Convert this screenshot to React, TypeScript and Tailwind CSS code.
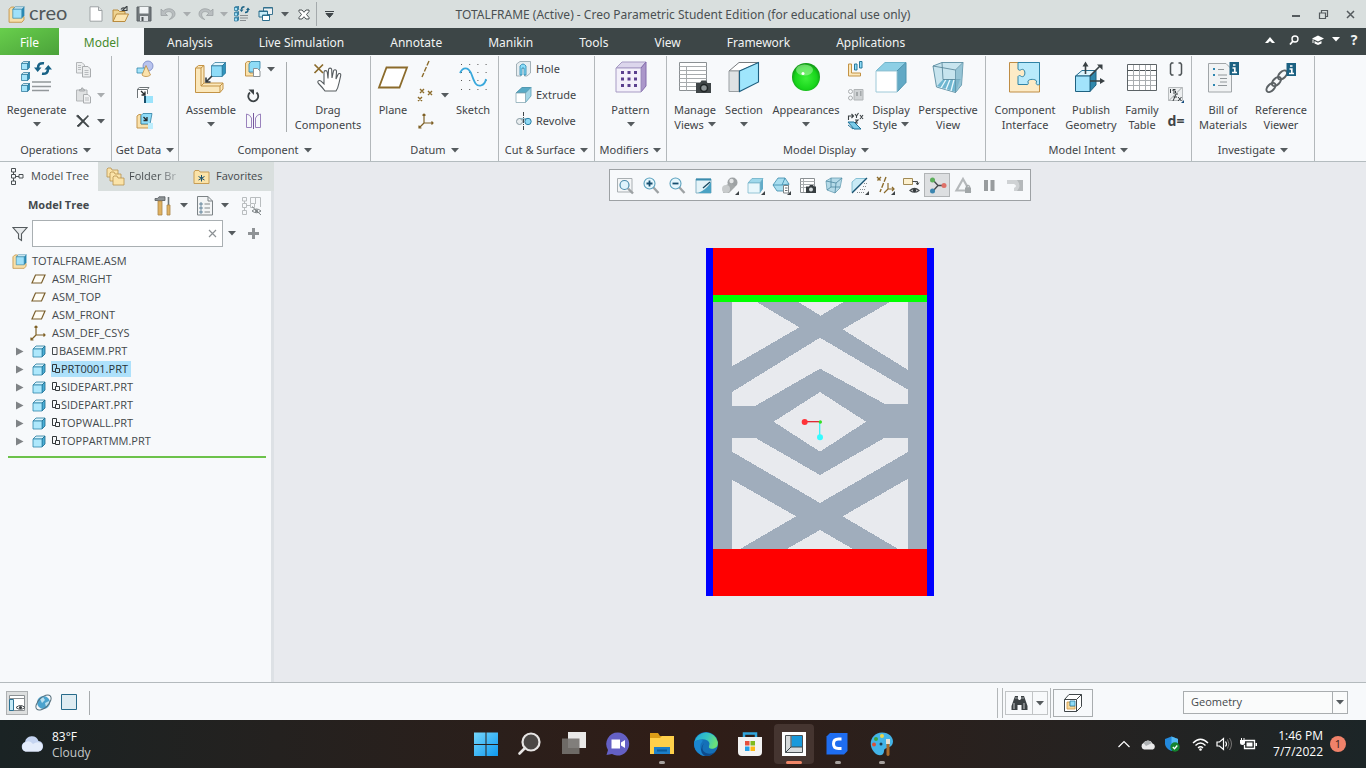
import type { ReactNode } from "react";

type IconProps = { children: ReactNode; w?: number; h?: number };
type CubeProps = { x: number; y: number; s: number; fill?: string; stroke?: string };

const Svg = ({ children, w = 18, h = w }: IconProps) => (
  <svg width={w} height={h} viewBox={`0 0 ${w} ${h}`} fill="none" className="shrink-0" aria-hidden="true">
    {children}
  </svg>
);

const Caret = ({ tone = "#555b5e" }: { tone?: string }) => (
  <svg width="8" height="5" viewBox="0 0 8 5" className="shrink-0" aria-hidden="true">
    <path d="M0 0H8L4 4.600Z" fill={tone} />
  </svg>
);

const CaretDrop = ({ label, width, tone }: { label: string; width: string; tone?: string }) => (
  <button type="button" aria-label={label} className={`flex h-6 items-center justify-center ${width}`}>
    <Caret tone={tone} />
  </button>
);

const Cube = ({ x, y, s, fill = "#a5e4fb", stroke = "#1f6f93" }: CubeProps) => {
  const d = s * 0.24;
  return (
    <g strokeLinejoin="round" strokeWidth="0.7">
      <path d={`M${x} ${y + d}L${x + d} ${y}H${x + s}L${x + s - d} ${y + d}Z`} fill="#e3f7fe" stroke={stroke} />
      <path d={`M${x + s - d} ${y + d}L${x + s} ${y}V${y + s - d}L${x + s - d} ${y + s}Z`} fill="#2f94bd" stroke={stroke} />
      <path d={`M${x} ${y + d}H${x + s - d}V${y + s}H${x}Z`} fill={fill} stroke={stroke} />
    </g>
  );
};

/* Shared glyphs */

const AssemblyIcon = ({ size = 16 }: { size?: number }) => (
  <svg width={size} height={size} viewBox="0 0 16 16" fill="none" className="shrink-0" aria-hidden="true">
    <path d="M1 3L3 1H6V10H15V13L13 15.3H1Z" fill="#f7dfa9" stroke="#c08f3e" strokeWidth=".8" />
    <path d="M4.500 3L7 .8H15.4L13 3Z" fill="#e2f7fe" stroke="#2a7ca0" strokeWidth=".6" />
    <path d="M4.500 3H13V11.500H4.500Z" fill="#9fe1fa" stroke="#2a7ca0" strokeWidth=".6" />
    <path d="M13 3L15.4 .8V9L13 11.5Z" fill="#2888b3" />
  </svg>
);

const PartIcon = () => (
  <Svg w={14} h={13}>
    <path d="M1 4L4 1H13L10 4Z" fill="#d8f4fd" stroke="#24789d" strokeWidth=".8" />
    <path d="M10 4L13 1V9L10 12Z" fill="#4aaed6" stroke="#1c6a8c" strokeWidth=".8" />
    <path d="M1 4H10V12H1Z" fill="#aee8fc" stroke="#2d86ab" strokeWidth=".8" />
  </Svg>
);

const PlaneSmall = () => (
  <Svg w={15} h={10}>
    <path d="M4.500 1H14L10.500 9H1Z" stroke="#7a5f2c" strokeWidth="1.2" fill="#fffdf5" />
  </Svg>
);

const CsysSmall = () => (
  <Svg w={17} h={16}>
    <path d="M6 1V10H15M6 10L1.500 14.500M4.500 2.500L6 1L7.500 2.500M13.500 8.500L15 10L13.500 11.500M1 12.500V15H3.500" stroke="#7f6126" strokeWidth="1.200" />
  </Svg>
);

const SheetArrows = () => (
  <Svg w={16}>
    <Cube x={0.5} y={0.5} s={4} />
    <Cube x={0.5} y={5.800} s={4} />
    <Cube x={0.5} y={11} s={4} />
    <path d="M6 9.500H14M6 12H14M6 14.500H12" stroke="#8a8f92" />
    <path d="M10.500 .8Q7.500 .8 7.500 3.500M11 6.500Q14 6.500 14 4" stroke="#1a6285" strokeWidth="1.400" />
    <path d="M5.500 3.500H9.500L7.500 6ZM12 4H16L14 1.500Z" fill="#1a6285" />
  </Svg>
);

const UndoIcon = ({ flip = false }: { flip?: boolean }) => (
  <Svg w={16} h={14}>
    <g transform={flip ? "translate(16 0) scale(-1 1)" : undefined}>
      <path d="M1 2V8.500H7.500L5.200 6.200C8 3.500 12 4.500 12.300 7.200C12.500 9.300 11.400 11 9.200 12.500C13 11.500 15.200 9.400 15 6.500C14.700 1.800 7.500-.2 3.200 4.100Z" fill="#b9bec0" stroke="#979c9e" strokeWidth="0.7" />
    </g>
  </Svg>
);

/* Large ribbon icons, drawn in a 34px box */

const bigIcons: Record<string, ReactNode> = {
  regenerate: (
    <>
      <Cube x={1.5} y={0.5} s={8} />
      <Cube x={1.5} y={11.5} s={8} />
      <Cube x={1.5} y={22.5} s={8} />
      <path d="M12 21H31M12 25.500H31M12 29.500H29" stroke="#93989b" strokeWidth="1.400" />
      <path d="M24 2.300Q18 1.500 18 7M22 12.700Q28 13.500 28 8" stroke="#186286" strokeWidth="2.600" />
      <path d="M14 6.500H21.500L17.700 11ZM24.500 8.500H32L28.300 4Z" fill="#186286" />
    </>
  ),
  assemble: (
    <>
      <path d="M1.500 7L4.500 4.500H10V22H29V28L26 31.500H1.500Z" fill="#fbe8bc" stroke="#c39345" />
      <path d="M1.500 7H7V25H26V31.500M7 7L10 4.500M7 25L10 22M26 25L29 22" stroke="#c39345" />
      <Cube x={17.5} y={1.500} s={14} fill="#8edcf8" />
      <path d="M18 15L12.500 20.500M12 16.500V21H16.500" stroke="#333a3d" strokeWidth="1.6" />
    </>
  ),
  drag: (
    <>
      <path d="M3.500 3.500L12 12M12 3.500L3.500 12" stroke="#8b6b2b" strokeWidth="1.700" />
      <path d="M14 30C12 27 9.500 24.500 7.500 22.500C5.700 20.500 8 18.500 10 20.200L13 23V11.500C13 9 16 9 16.300 11.500L17 17.500L17.500 8.800C17.700 6.600 20.500 6.600 20.700 8.800L21 17L22.500 10C23 8 25.700 8.500 25.500 10.700L25 18L27 13.500C28 11.600 30.300 12.600 29.700 14.700L28 22C27.300 25.500 26.500 28 25 30Z" fill="#fff" stroke="#565c5f" strokeWidth="1.100" />
    </>
  ),
  plane: <path d="M10.500 6.500H31L23.500 26.500H3Z" stroke="#8b6b2b" strokeWidth="1.800" fill="#fff" />,
  sketch: (
    <>
      <path d="M5 3.500H31M5 11.500H31M5 19.500H31M5 28.500H31" stroke="#555" strokeDasharray="1 7.200" />
      <path d="M4 12C7 5.500 12 6 15 12C18 19 19 26 25 24.500C28 23.500 29.500 21 30 18" stroke="#38a8dc" strokeWidth="1.800" />
    </>
  ),
  pattern: (
    <>
      <path d="M2 7L8 1H32L27 7Z" fill="#dcd6ec" stroke="#a79bc4" />
      <path d="M27 7L32 1V25L27 31Z" fill="#ab97ca" stroke="#846cad" />
      <path d="M2 7H27V31H2Z" fill="#f3f0fa" stroke="#a79bc4" />
      {[10, 16.500, 23].map((y) => [7, 13.500, 20].map((x) => (
        <path key={`${x}-${y}`} d={`M${x} ${y}h3v3h-3z`} fill="#5a3f8e" />
      )))}
    </>
  ),
  views: (
    <>
      <path d="M1.500 1.500H28.500V29.500H1.500Z" fill="#fff" stroke="#8b9093" />
      <path d="M1.500 5.500H28.500M1.500 9.500H28.500M1.500 13.500H28.500M1.500 17.500H28.500M1.500 21.500H28.500M1.500 25.500H28.500M8.500 5.500V29.500" stroke="#a7abad" />
      <path d="M18 22H22L23.500 19.500H28L29.500 22H33V32H18Z" fill="#3f4547" />
      <circle cx="26" cy="27" r="3.500" fill="#8d9496" stroke="#1f2425" strokeWidth="1.500" />
    </>
  ),
  section: (
    <>
      <path d="M2 10L12 1.500H32L13 10Z" fill="#fff" stroke="#555b5e" strokeWidth=".8" />
      <path d="M2 10H12V30.500H2Z" fill="#dfe2e4" stroke="#9a9fa2" />
      <path d="M12.500 10L31.500 1.500V21L12.500 30.500Z" fill="#9fe6fc" stroke="#1d5f80" strokeWidth="1.100" />
    </>
  ),
  appearance: (
    <>
      <defs>
        <radialGradient id="ball" cx=".5" cy=".55" r=".52">
          <stop offset="0" stopColor="#3df03a" />
          <stop offset=".75" stopColor="#18d51b" />
          <stop offset="1" stopColor="#129d17" />
        </radialGradient>
      </defs>
      <circle cx="17" cy="16" r="14" fill="url(#ball)" />
      <ellipse cx="15.500" cy="9" rx="8.500" ry="5.500" fill="#b9fab2" opacity=".5" />
      <circle cx="14" cy="12.500" r="1.500" fill="#fff" />
    </>
  ),
  display: (
    <>
      <path d="M2 10L11 1.500H32L23 10Z" fill="#8dcfe5" stroke="#6fb4cb" />
      <path d="M23 10L32 1.500V21.500L23 31Z" fill="#62a9c5" stroke="#4d93ae" />
      <path d="M2 10H23V31H2Z" fill="#fff" stroke="#9ec9d8" />
    </>
  ),
  perspective: (
    <>
      <path d="M2 5L11 1.500H32L30.500 24L24.500 31.500L5.500 26Z" fill="#c7e4ee" stroke="#6797aa" />
      <path d="M6 25L12 18.500H29L25 31Z" fill="#6fb6d0" />
      <path d="M10 27L15 18.500M15 28.500L19 18.500M20 30L23 18.500" stroke="#e9f8fd" strokeWidth="1.300" />
      <path d="M2 5L24.500 9L32 1.500M24.500 9V31.500M11 1.500L12 18.500H29.500" stroke="#507f93" strokeWidth=".8" />
      <path d="M24.500 9L32 1.500L30.500 24L24.500 31.500Z" fill="#81b6ca" opacity=".7" />
    </>
  ),
  component: (
    <>
      <path d="M1.500 1.500H31.500V31H1.500Z" fill="#fdebc6" stroke="#bf8d45" />
      <path d="M10 1.500H31.500V23.500C29 24.500 27.500 23 28.500 21C29.500 17.500 19 17.500 20 21C20.800 23 20 24 18 23.500H10V15.500C11 14 12 14.500 13.500 15.500C18 17 18 7 13.500 8.500C12 9.500 10.500 9.500 10 8Z" fill="#b9eafb" stroke="#2f83a6" />
    </>
  ),
  publish: (
    <>
      <path d="M1.500 15L8 9.500H22L16 15Z" fill="#dff5fd" stroke="#266f90" />
      <path d="M16 15L22 9.500V24L16 30.500Z" fill="#2f87ab" stroke="#1f6281" />
      <path d="M1.500 15H16V30.500H1.500Z" fill="#a2e3fb" stroke="#1f6281" />
      <path d="M11.500 13V3M16 15L26 5M16 20H27" stroke="#394144" strokeWidth="1.600" />
      <path d="M8.500 5.500L11.500 .5L14.500 5.500ZM23 3.500H28.500V9ZM26 17L31 20L26 23Z" fill="#394144" />
    </>
  ),
  family: (
    <>
      <path d="M2.500 3.500H31.500V29.500H2.500Z" fill="#fff" stroke="#5c6366" />
      <path d="M2.500 9.500H31.500" stroke="#4c5356" />
      <path d="M3 14.500H31M3 19.500H31M3 24.500H31M8.500 4V29M14.500 4V29M20.500 4V29M25.500 4V29" stroke="#a9adb0" />
    </>
  ),
  bill: (
    <>
      <path d="M2.500 2.500H20L25.500 8V31H2.500Z" fill="#f1f3f4" stroke="#a0a5a8" />
      <path d="M7 7H9V9H7ZM7 13H9V15H7ZM7 23H9V25H7Z" fill="#2e86b1" />
      <path d="M12 8.500H18M12 14H21M14 17.500H21M14 21H21M12 24.500H21" stroke="#909699" />
      <path d="M23.500 1H33V14H23.500Z" fill="#1b6182" />
      <path d="M27 4H29.500M26.500 7H28.800V11M26 11.500H31" stroke="#fff" strokeWidth="1.700" />
    </>
  ),
  reference: (
    <>
      <g stroke="#5c6265" strokeWidth="2">
        <ellipse cx="7" cy="26.500" rx="5.500" ry="3.200" transform="rotate(-45 7 26.500)" />
        <ellipse cx="12.500" cy="20.500" rx="5.500" ry="3.200" transform="rotate(-45 12.500 20.500)" />
        <ellipse cx="18.500" cy="14" rx="5.500" ry="3.200" transform="rotate(-45 18.500 14)" />
      </g>
      <path d="M22.500 2H32V15H22.500Z" fill="#1b6182" />
      <path d="M26 5H28.500M25.500 8H27.800V12M25 12.500H30" stroke="#fff" strokeWidth="1.700" />
    </>
  ),
};

type BigProps = { icon: string; lines: string[]; width: string; caret?: "below" | "inline" };

const BigButton = ({ icon, lines, width, caret }: BigProps) => (
  <button type="button" className={`flex flex-col items-center ${width}`}>
    <span className="mt-[5px] mb-[7px]">
      <Svg w={34}>{bigIcons[icon]}</Svg>
    </span>
    {lines.map((line, i) => (
      <span key={line} className="flex items-center gap-1 whitespace-nowrap leading-[15px]">
        {line}
        {caret === "inline" && i === lines.length - 1 && <Caret />}
      </span>
    ))}
    {caret === "below" && (
      <span className="flex h-[15px] items-center">
        <Caret />
      </span>
    )}
  </button>
);

const SmallRow = ({ label, children, drop, width = "w-5" }: { label: string; children: ReactNode; drop?: string; width?: string }) => (
  <div className="flex h-[26px] items-center">
    <button type="button" aria-label={label} className={`flex items-center justify-center ${width}`}>
      {children}
    </button>
    {drop && <CaretDrop label={`${label} options`} width="w-4" tone={drop} />}
  </div>
);

const Group = ({ title, width, children }: { title: string; width: string; children: ReactNode }) => (
  <section aria-label={title} className={`flex shrink-0 flex-col border-r border-[#b3b8bb] ${width}`}>
    <div className="flex h-[84px]">{children}</div>
    <button type="button" className="flex h-[21px] items-center justify-center gap-[5px] whitespace-nowrap">
      {title}
      <Caret />
    </button>
  </section>
);

const GREY = "#a9adaf";
const DARK = "#555b5e";

const Ribbon = () => (
  <div className="flex overflow-hidden border-b border-[#b4bcbf] bg-[#f7f9fb] pt-px font-['Noto_Sans',sans-serif] text-[11px] text-[#3f4447]">
    <Group title="Operations" width="w-28">
      <BigButton icon="regenerate" lines={["Regenerate"]} width="w-[73px]" caret="below" />
      <div>
        <SmallRow label="Copy">
          <Svg w={17}>
            <path d="M1.500 1.500H7L9.500 4V12H1.500Z" fill="#eceeef" stroke="#b3b6b8" />
            <path d="M7.500 5.500H13L15.500 8V16H7.500Z" fill="#eceeef" stroke="#a9acae" />
            <path d="M3 4.500H6M3 6.500H6M3 8.500H6M9.500 9.500H13.500M9.500 11.500H13.500M9.500 13.500H13.500" stroke="#b9bcbe" />
          </Svg>
        </SmallRow>
        <SmallRow label="Paste" drop={GREY}>
          <Svg w={17}>
            <path d="M1.500 3H12V14H1.500Z" fill="#dfe1e2" stroke="#b3b6b8" />
            <path d="M4.500 4V2.500H6.500V1H8V2.500H9.500V4Z" fill="#c9cccd" stroke="#a9acae" />
            <path d="M8.500 7.500H13L15.500 10V16H8.500Z" fill="#f1f2f3" stroke="#a9acae" />
            <path d="M10 11H14M10 13H14" stroke="#b9bcbe" />
          </Svg>
        </SmallRow>
        <SmallRow label="Delete" drop={DARK}>
          <Svg w={16} h={14}>
            <path d="M1.500 2L3 1L14 12.500L13 13ZM2 12L13 1.500L13.500 2L4 12.500Z" fill="#3f4547" stroke="#3f4547" strokeWidth=".8" />
          </Svg>
        </SmallRow>
      </div>
    </Group>
    <Group title="Get Data" width="w-[67px]">
      <div className="flex-1 pl-[23px]">
        <SmallRow label="User-defined feature">
          <Svg w={18}>
            <circle cx="12" cy="6" r="5" fill="#b9c4ee" stroke="#7284c4" strokeWidth=".8" />
            <path d="M1 8H9V13H1Z" fill="#a5e4fb" stroke="#3489ac" strokeWidth=".8" />
            <path d="M10 5.500L14.500 15C12 17 8 17 6 15Z" fill="#fae2ac" stroke="#bb8d43" strokeWidth=".8" />
          </Svg>
        </SmallRow>
        <SmallRow label="Copy geometry">
          <Svg w={18}>
            <path d="M1.500 12V3L3.500 1.500H13L11.500 3.500V8" fill="#fff" stroke="#6e7578" />
            <path d="M1.500 3.500H11" stroke="#6e7578" />
            <path d="M5 5L9 9M9 5.500V9H5.500" stroke="#262b2d" strokeWidth="1.300" />
            <path d="M8 10H10V17H8Z" fill="#174f6b" />
            <path d="M10 10H17V17H10Z" fill="#9be3fb" />
          </Svg>
        </SmallRow>
        <SmallRow label="Shrinkwrap">
          <Svg w={18}>
            <path d="M1 4L3 2.500H5V12H14V16H1Z" fill="#fae2ac" stroke="#c3954c" />
            <path d="M5 3.500L7 1.500H16L14 12H5Z" fill="#8fdcf7" stroke="#2c7fa3" strokeWidth=".8" />
            <path d="M7.500 5L11 8.500M11 5V8.500H7.500" stroke="#262b2d" strokeWidth="1.300" />
            <path d="M12 11H17V17H12Z" fill="#bdeefd" />
          </Svg>
        </SmallRow>
      </div>
    </Group>
    <Group title="Component" width="w-48">
      <BigButton icon="assemble" lines={["Assemble"]} width="w-16" caret="below" />
      <div>
        <SmallRow label="Create" drop={DARK}>
          <Svg w={18}>
            <path d="M1.500 3L3.500 1.500H6V13H14V16H1.500Z" fill="#fae2ac" stroke="#c3954c" />
            <path d="M5 4L7 1.500H16V8L14 12H5Z" fill="#8fdcf7" stroke="#2c7fa3" strokeWidth=".8" />
            <path d="M9.500 8.500H13.500L16 11V16.500H9.500Z" fill="#fff" stroke="#8b9194" />
          </Svg>
        </SmallRow>
        <SmallRow label="Repeat">
          <Svg w={14} h={15}>
            <path d="M4 4.500A5 5 0 1 0 10.500 4.500" stroke="#3c4245" strokeWidth="1.800" />
            <path d="M2.500 1.500H8V7Z" fill="#3c4245" />
          </Svg>
        </SmallRow>
        <SmallRow label="Mirror component">
          <Svg w={17} h={16}>
            <path d="M1.500 1V14.500H6.500V5Q5 1.500 1.500 1ZM15.500 1V14.500H10.500V5Q12 1.500 15.500 1Z" stroke="#9a83bd" />
            <path d="M8.500 0V16" stroke="#77599f" />
          </Svg>
        </SmallRow>
      </div>
      <div className="mt-1.5 ml-[7px] h-[70px] w-px bg-[#a8acae]" />
      <BigButton icon="drag" lines={["Drag", "Components"]} width="w-[82px]" />
    </Group>
    <Group title="Datum" width="w-32">
      <BigButton icon="plane" lines={["Plane"]} width="w-11" />
      <div>
        <SmallRow label="Axis" width="w-[22px]">
          <Svg w={18}>
            <path d="M12 1L5 17" stroke="#8b6b2b" strokeWidth="1.400" strokeDasharray="5 1.500" />
          </Svg>
        </SmallRow>
        <SmallRow label="Point" drop={DARK} width="w-[22px]">
          <Svg w={18}>
            <path d="M3 3L7 7M7 3L3 7M11 5L15 9M15 5L11 9M1 11L5 15M5 11L1 15" stroke="#8b6b2b" strokeWidth="1.400" />
          </Svg>
        </SmallRow>
        <SmallRow label="Coordinate system" width="w-[22px]">
          <CsysSmall />
        </SmallRow>
      </div>
      <BigButton icon="sketch" lines={["Sketch"]} width="w-10" />
    </Group>
    <Group title="Cut &amp; Surface" width="w-24">
      <div className="pl-4">
        {([
          ["Hole", <><path d="M1.500 4L5 1.500H15.500V13L12 16H9.500V8H6V16H1.500Z" fill="#e6edf0" stroke="#8fa0a8" strokeWidth=".8" /><path d="M5 15V6Q8 2 11 6V15H9V8H7V15Z" fill="#8adcf8" stroke="#2685ad" strokeWidth=".8" /></>],
          ["Extrude", <><path d="M1 7L7 1.500H16L10.500 7Z" fill="#58aac6" stroke="#3e8aa5" strokeWidth=".8" /><path d="M10.500 7L16 1.500V10L10.500 16.500Z" fill="#a4d6e6" stroke="#5c9fb6" strokeWidth=".8" /><path d="M1 7H10.500V16.500H1Z" fill="#fff" stroke="#8aa9b5" strokeWidth=".8" /></>],
          ["Revolve", <><path d="M4 6H13V8H4Z" fill="#9cc3d2" /><circle cx="4.500" cy="9.500" r="3" stroke="#8a9ba3" fill="#e8edef" /><circle cx="13" cy="9.500" r="3.200" fill="#8fd9f4" stroke="#2c80a4" /><path d="M8.500 0V18" stroke="#40474a" strokeDasharray="4 1 1 1" /></>],
        ] as [string, ReactNode][]).map(([name, art]) => (
          <button key={name} type="button" className="flex h-[26px] items-center gap-[3px]">
            <Svg w={18}>{art}</Svg>
            {name}
          </button>
        ))}
      </div>
    </Group>
    <Group title="Modifiers" width="w-[72px]">
      <BigButton icon="pattern" lines={["Pattern"]} width="w-full" caret="below" />
    </Group>
    <Group title="Model Display" width="w-[319px]">
      <BigButton icon="views" lines={["Manage", "Views"]} width="w-14" caret="inline" />
      <BigButton icon="section" lines={["Section"]} width="w-[42px]" caret="below" />
      <BigButton icon="appearance" lines={["Appearances"]} width="w-[82px]" caret="below" />
      <div>
        <SmallRow label="Exploded view" width="w-[18px]">
          <Svg w={18}>
            <path d="M1.500 4H4.500V13H13.500V16H1.500Z" fill="#fbe8bc" stroke="#c39345" />
            <path d="M7.500 4H10V10H7.500ZM12.500 1.500H15V8H12.500Z" fill="#8edcf8" stroke="#26789b" />
          </Svg>
        </SmallRow>
        <SmallRow label="Toggle status" width="w-[18px]">
          <Svg w={18} h={14}>
            <circle cx="3.500" cy="3.500" r="2" stroke="#aaaeb0" />
            <circle cx="3.500" cy="10" r="2" stroke="#aaaeb0" />
            <path d="M7 1.500H16V12H7Z" fill="#d0d3d5" stroke="#b0b4b6" />
            <path d="M9 4H11V8H9ZM13 3H14.500V8H13Z" fill="#a3a8aa" />
          </Svg>
        </SmallRow>
        <SmallRow label="Edit position" width="w-[18px]">
          <Svg w={18}>
            <path d="M1.500 8V4H6M4.500 2L6.500 4L4.500 6M8 2L9.500 4L11.500 1M9.500 4V6M13 3L16 7M16 3L13 7M8 8H11L8 11H11" stroke="#3c4245" strokeWidth="1.100" />
            <path d="M1 10H7L14 17H7ZM1 13L6 17" fill="#7ccce9" stroke="#1b6e95" />
          </Svg>
        </SmallRow>
      </div>
      <BigButton icon="display" lines={["Display", "Style"]} width="w-[52px]" caret="inline" />
      <BigButton icon="perspective" lines={["Perspective", "View"]} width="w-[62px]" />
    </Group>
    <Group title="Model Intent" width="w-[206px]">
      <BigButton icon="component" lines={["Component", "Interface"]} width="w-[78px]" />
      <BigButton icon="publish" lines={["Publish", "Geometry"]} width="w-[54px]" />
      <BigButton icon="family" lines={["Family", "Table"]} width="w-12" />
      <div>
        <SmallRow label="Parameters">
          <Svg w={14} h={14}>
            <path d="M4.500 1H2.500L1.500 2.500V11.500L2.500 13H4.500M9.500 1H11.500L12.500 2.500V11.500L11.500 13H9.500" stroke="#4d5356" strokeWidth="1.500" />
          </Svg>
        </SmallRow>
        <SmallRow label="Switch symbols">
          <Svg w={18}>
            <path d="M1.500 1.500H15.500V14.500H1.500Z" fill="#eceeef" stroke="#b8bcbe" />
            <path d="M15 1.500L2 14.500" stroke="#a0a5a7" />
            <path d="M3.500 3V7M8.500 3.500H6V5H8.500V7H6M6 15L9 8H11M6.500 11H10M11 11L14.500 15M14.500 11L11 15" stroke="#363c3f" />
            <path d="M17 14V17H14Z" fill="#174e80" />
          </Svg>
        </SmallRow>
        <SmallRow label="Relations">
          <span className="text-sm font-bold leading-5">d=</span>
        </SmallRow>
      </div>
    </Group>
    <Group title="Investigate" width="w-[123px]">
      <BigButton icon="bill" lines={["Bill of", "Materials"]} width="w-[62px]" />
      <BigButton icon="reference" lines={["Reference", "Viewer"]} width="w-[54px]" />
    </Group>
  </div>
);

const TitleButton = ({ label, children }: { label: string; children: ReactNode }) => (
  <button type="button" aria-label={label} className="flex h-6 w-6 items-center justify-center">
    {children}
  </button>
);

const TitleBar = () => (
  <header className="grid h-7 grid-cols-[1fr_auto_1fr] items-center bg-[#d9dfde]">
    <div className="flex items-center">
      <div className="flex w-[84px] items-center gap-1 pl-2">
        <AssemblyIcon size={17} />
        <span className="pb-1 font-[Lato] text-xl leading-5 text-[#50575a]">creo</span>
      </div>
      <TitleButton label="New">
        <Svg w={14} h={16}>
          <path d="M1 .8H9.500L13 4.500V15.200H1Z" fill="#fff" stroke="#9da2a4" />
          <path d="M9.500 .8V4.500H13" fill="#dfe2e3" stroke="#9da2a4" />
        </Svg>
      </TitleButton>
      <TitleButton label="Open">
        <Svg w={17}>
          <path d="M1 15.500V4H6L7.500 5.500H13V8" fill="#eed391" stroke="#b98b3e" />
          <path d="M1 15.500L4.500 8H16.500L13 15.500Z" fill="#fbe5b1" stroke="#b98b3e" />
          <path d="M9 3.500Q10.500 1 13.500 2.500M15 0V4.500H10.500Z" stroke="#3d4346" strokeWidth="1.100" />
        </Svg>
      </TitleButton>
      <TitleButton label="Save">
        <Svg w={16}>
          <path d="M1 1H15V15H1Z" fill="#73797c" stroke="#5b6164" />
          <path d="M3.500 1H12.500V7.500H3.500Z" fill="#f1f4f5" />
          <path d="M4 10H12V15H4Z" fill="#dfe3e5" />
          <path d="M5.500 11H7.500V15H5.500Z" fill="#4c5255" />
        </Svg>
      </TitleButton>
      <TitleButton label="Undo">
        <UndoIcon />
      </TitleButton>
      <CaretDrop label="Undo history" width="w-3.5" tone={GREY} />
      <TitleButton label="Redo">
        <UndoIcon flip />
      </TitleButton>
      <CaretDrop label="Redo history" width="w-3" tone={GREY} />
      <TitleButton label="Regenerate">
        <SheetArrows />
      </TitleButton>
      <TitleButton label="Windows">
        <Svg w={16}>
          <path d="M5.500 1.500H14.500V8.500H5.500Z" fill="#eef1f2" stroke="#3c7490" />
          <path d="M1 5H9.500V11H1Z" fill="#c9ecf8" stroke="#2b6e8d" />
          <path d="M4.500 9H11.500V14.500H4.500Z" fill="#fff" stroke="#2b6e8d" />
          <path d="M1 5.500H9.500M5.500 2H14.500M4.500 9.500H11.500" stroke="#2b6e8d" />
        </Svg>
      </TitleButton>
      <CaretDrop label="Window list" width="w-3.5" />
      <TitleButton label="Close">
        <Svg w={12} h={11}>
          <path d="M1 1H4L6 3.300L8 1H11V2.500L8.500 5.500L11 8.500V10H8L6 7.700L4 10H1V8.500L3.500 5.500L1 2.500Z" stroke="#4a5053" fill="#fff" />
        </Svg>
      </TitleButton>
      <div className="h-6 w-px bg-[#a4aaac]" />
      <TitleButton label="Customize toolbar">
        <Svg w={9} h={7}>
          <path d="M0 .5H9M1 2.500H8L4.500 6.500Z" stroke="#3f4548" fill="#3f4548" />
        </Svg>
      </TitleButton>
    </div>
    <h1 className="whitespace-nowrap pt-px font-['Noto_Sans',sans-serif] font-normal text-[#4a5052]">
      TOTALFRAME (Active) - Creo Parametric Student Edition (for educational use only)
    </h1>
    <div className="flex items-center justify-end gap-[3px] pr-1">
      <TitleButton label="Minimize">
        <Svg w={10}>
          <path d="M1 7H9" stroke="#555b5e" strokeWidth="2" />
        </Svg>
      </TitleButton>
      <TitleButton label="Restore">
        <Svg w={11}>
          <path d="M3.500 3.500V1.500H9.500V7.500H7.500M1.500 4H7.500V9.500H1.500Z" stroke="#555b5e" strokeWidth="1.200" />
        </Svg>
      </TitleButton>
      <TitleButton label="Close window">
        <Svg w={9}>
          <path d="M1 1L8 8M8 1L1 8" stroke="#555b5e" strokeWidth="1.500" />
        </Svg>
      </TitleButton>
    </div>
  </header>
);

const tabs = ["Analysis", "Live Simulation", "Annotate", "Manikin", "Tools", "View", "Framework", "Applications"];

const TabBar = () => (
  <nav aria-label="Ribbon tabs" className="flex h-[27px] bg-[#3d4647] font-['Noto_Sans',sans-serif] text-[#f1f3f3]">
    <button type="button" className="w-[59px] bg-linear-to-br from-[#68cf4c] to-[#4ba23a] pt-0.5 text-white">File</button>
    <button type="button" className="w-[85px] bg-[#f7f9fb] pt-0.5 text-[#468a2c]">Model</button>
    {tabs.map((tab) => (
      <button key={tab} type="button" className="whitespace-nowrap px-[23px] pt-0.5">
        {tab}
      </button>
    ))}
    <div className="ml-auto flex items-center pb-1">
      <TitleButton label="Collapse ribbon">
        <Svg w={12} h={6}>
          <path d="M1 6L6 0L11 6H8L6 4L4 6Z" fill="#fff" />
        </Svg>
      </TitleButton>
      <TitleButton label="Search">
        <Svg w={10}>
          <circle cx="6" cy="4" r="3" stroke="#fff" strokeWidth="1.400" />
          <path d="M4 6L1 9.500" stroke="#fff" strokeWidth="1.800" />
        </Svg>
      </TitleButton>
      <TitleButton label="Learning">
        <Svg w={12} h={10}>
          <path d="M0 3.500L6 .5L12 3.500L6 6.500ZM2.500 6L6 7.800L9.500 6V8.500L6 10L2.500 8.500ZM.5 4.500H1.500V8H.5Z" fill="#fff" />
        </Svg>
      </TitleButton>
      <CaretDrop label="Learning options" width="w-3" tone="#ffffff" />
      <button type="button" className="h-6 w-6 text-sm font-bold leading-6" aria-label="Help">?</button>
    </div>
  </nav>
);

type TreeItem = { name: string; kind: "plane" | "csys" | "part"; marker?: "single" | "double"; selected?: boolean };

const treeItems: TreeItem[] = [
  { name: "ASM_RIGHT", kind: "plane" },
  { name: "ASM_TOP", kind: "plane" },
  { name: "ASM_FRONT", kind: "plane" },
  { name: "ASM_DEF_CSYS", kind: "csys" },
  { name: "BASEMM.PRT", kind: "part", marker: "single" },
  { name: "PRT0001.PRT", kind: "part", marker: "double", selected: true },
  { name: "SIDEPART.PRT", kind: "part", marker: "double" },
  { name: "SIDEPART.PRT", kind: "part", marker: "double" },
  { name: "TOPWALL.PRT", kind: "part", marker: "double" },
  { name: "TOPPARTMM.PRT", kind: "part", marker: "double" },
];

const TreeRow = ({ item }: { item: TreeItem }) => (
  <li className="flex h-[18px] items-center">
    {item.kind === "part" ? (
      <button type="button" aria-label={`Expand ${item.name}`} className="flex w-7 items-center justify-center pl-3">
        <Svg w={8} h={9}>
          <path d="M0 .5L7.500 4.500L0 8.500Z" fill="#7f8386" />
        </Svg>
      </button>
    ) : (
      <span className="w-7" />
    )}
    <span className="flex w-[23px] items-center justify-center pr-0.5">
      {item.kind === "plane" && <PlaneSmall />}
      {item.kind === "csys" && <CsysSmall />}
      {item.kind === "part" && <PartIcon />}
    </span>
    <span className={`flex h-4 items-center gap-px pr-[3px] pl-px ${item.selected ? "bg-[#aee1fb] text-[#273237]" : ""}`}>
      {item.marker === "single" && (
        <Svg w={6} h={9}>
          <path d="M.5 .5H5V7.500H.5Z" stroke="#44494c" />
        </Svg>
      )}
      {item.marker === "double" && (
        <Svg w={8} h={10}>
          <path d="M3.500 7.500H.5V.5H4.500V4M3.500 4.500H7.500V8.500H3.500Z" stroke="#33383b" />
        </Svg>
      )}
      {item.name}
    </span>
  </li>
);

const SidePanel = () => (
  <aside className="flex w-[274px] shrink-0 flex-col border-r-[3px] border-[#dde1e5] bg-[#f7f9fb] text-[11px] text-[#44494c]">
    <div className="-mr-[3px] flex h-[29px] bg-[#d9dfde]">
      <button type="button" className="flex w-[98px] items-center gap-[7px] whitespace-nowrap bg-[#f7f9fb] pl-2.5">
        <Svg w={14} h={19}>
          <path d="M1.500 1.500H5.500V5H1.500ZM1.500 7.500H5.500V11H1.500ZM1.500 14H5.500V17.500H1.500ZM9 7.500H13V11H9Z" stroke="#4a5053" />
          <path d="M3.500 5V7.500M3.500 11V14M5.500 9.500H9" stroke="#4a5053" />
        </Svg>
        Model Tree
      </button>
      <button type="button" className="flex w-[78px] items-center gap-1 overflow-hidden whitespace-nowrap pl-2">
        <Svg w={19}>
          {[[1, 1], [4, 5], [7, 9]].map(([x, y]) => (
            <path key={x} d={`M${x} ${y + 1}L${x + 1} ${y}H${x + 4}L${x + 5} ${y + 2}H${x + 11}V${y + 9}H${x}Z`} fill="#fbe3a8" stroke="#b8924f" strokeWidth=".8" />
          ))}
        </Svg>
        <span className="bg-linear-to-r from-[#44494c] from-60% to-[#a9aeb0] bg-clip-text text-transparent">Folder Br</span>
      </button>
      <button type="button" className="flex items-center gap-[6px] whitespace-nowrap pl-[17px]">
        <Svg w={17} h={16}>
          <path d="M1 3L2 1.500H6L7 3H16V14.500H1Z" fill="#fbe3a8" stroke="#c79d55" />
          <path d="M8.500 6V12.500M5.500 7.500L11.500 11M11.500 7.500L5.500 11" stroke="#17506e" />
        </Svg>
        Favorites
      </button>
    </div>
    <div className="flex h-[29px] items-center pr-[9px] pl-7">
      <h2 className="flex-1 font-bold">Model Tree</h2>
      <TitleButton label="Settings">
        <Svg w={18} h={20}>
          <path d="M1 2.500H3.500L5 .8H11V4.500H1Z" fill="#8e9496" stroke="#555b5e" strokeWidth=".8" />
          <path d="M4 5H8V19H4Z" fill="#dfb160" stroke="#a9864a" strokeWidth=".8" />
          <path d="M14.500 1V9" stroke="#6e7578" strokeWidth="1.600" />
          <path d="M13 9H16V19H13Z" fill="#e0b263" stroke="#a9864a" strokeWidth=".8" />
        </Svg>
      </TitleButton>
      <CaretDrop label="Settings options" width="w-[18px]" />
      <TitleButton label="Show">
        <Svg w={16} h={20}>
          <path d="M.5 .5H11L15.500 5V19H.5Z" fill="#f3f5f6" stroke="#7c8386" />
          <path d="M11 .5V5H15.500" stroke="#7c8386" />
          <path d="M7.500 8H13M7.500 12H13M7.500 16H13" stroke="#666c6f" strokeWidth=".8" />
          <path d="M3 7H5V9H3ZM3 11H5V13H3ZM3 15H5V17H3Z" stroke="#47708a" strokeWidth=".8" />
        </Svg>
      </TitleButton>
      <CaretDrop label="Show options" width="w-4" />
      <button type="button" aria-label="Hide items" className="pl-2">
        <Svg w={21} h={20}>
          <path d="M1.500 1.500H5.500V5H1.500ZM1.500 7.500H5.500V11.500H1.500ZM1.500 14.500H5.500V18.500H1.500ZM3.500 5V7.500M3.500 11.500V14.500M5.500 9.500H9.500M9.500 7.500H13.500V11.500H9.500ZM9.500 1.500V7M9.500 1.500H19.500V11M14.500 1V8" stroke="#b9bdbf" />
          <path d="M11 15Q15.500 11 20 15Q15.500 18.500 11 15ZM11 10.500L20 19" stroke="#7e8486" />
          <circle cx="15.500" cy="15" r="1.500" fill="#7e8486" />
        </Svg>
      </button>
    </div>
    <div className="flex h-[27px] items-center pl-3">
      <Svg w={16}>
        <path d="M1 1.500H15L9.500 8V14.500L6.500 12.500V8Z" fill="#e7eaec" stroke="#555b5e" strokeWidth="1.100" />
      </Svg>
      <div className="ml-1 flex h-[27px] w-[191px] items-center border border-[#a9afb2] bg-white">
        <input type="text" aria-label="Filter tree" className="min-w-0 flex-1 px-1 outline-none" />
        <button type="button" aria-label="Clear filter" className="flex h-5 w-[19px] items-center justify-center">
          <Svg w={9}>
            <path d="M1 1L8 8M8 1L1 8" stroke="#8c9194" strokeWidth="1.200" />
          </Svg>
        </button>
      </div>
      <CaretDrop label="Filter options" width="w-[18px]" />
      <TitleButton label="Add filter">
        <Svg w={11}>
          <path d="M5.500 0V11M0 5.500H11" stroke="#8f9396" strokeWidth="3" />
        </Svg>
      </TitleButton>
    </div>
    <div className="pt-[5px]">
      <div className="flex h-[18px] items-center gap-[5px] pl-3">
        <AssemblyIcon size={15} />
        TOTALFRAME.ASM
      </div>
      <ul>
        {treeItems.map((item, i) => (
          <TreeRow key={i} item={item} />
        ))}
      </ul>
      <div className="mt-1.5 mr-[5px] ml-2 h-0.5 bg-[#6cc24a]" />
    </div>
  </aside>
);

const corner = <path d="M19 15V19H15Z" fill="#3d4346" />;
const lens = <path d="M11 11L16.500 17" stroke="#9da2a4" strokeWidth="2.400" />;

const viewTools: [string, ReactNode][] = [
  ["Refit", <><path d="M1.500 2.500H16V16H1.500Z" fill="#f4f6f7" stroke="#a9afb2" /><circle cx="8.500" cy="9" r="4.500" fill="#def4fc" stroke="#4a8cab" strokeWidth="1.200" /><path d="M12 12.500L17 17.500" stroke="#9da2a4" strokeWidth="2.400" /></>],
  ["Zoom in", <>{lens}<circle cx="7.500" cy="7.500" r="5.500" fill="#e6f7fd" stroke="#5aa0bd" strokeWidth="1.100" /><path d="M7.500 4.500V10.500M4.500 7.500H10.500" stroke="#164f70" strokeWidth="1.800" /></>],
  ["Zoom out", <>{lens}<circle cx="7.500" cy="7.500" r="5.500" fill="#e6f7fd" stroke="#5aa0bd" strokeWidth="1.100" /><path d="M4.500 7.500H10.500" stroke="#164f70" strokeWidth="1.800" /></>],
  ["Repaint", <><path d="M2 3H17V17H2Z" fill="#e4f3f8" stroke="#86b3c5" /><path d="M2 2.500H17V4.500H2Z" fill="#3a8cae" /><path d="M17 6V17H4Q12 14 17 6Z" fill="#4aa2c3" /><path d="M9 12L16 6" stroke="#17475e" strokeWidth="1.300" /></>],
  ["Shading", <><circle cx="12.500" cy="6.500" r="5" fill="#9ea2a4" /><path d="M6 9L11 7L15 11L9 17H3Z" fill="#a5a9aa" /><circle cx="11.500" cy="5" r="2.200" fill="#e4e6e7" /><circle cx="6" cy="13" r="4" fill="#c8cbcc" />{corner}</>],
  ["Display style", <><path d="M2 7L6 2.500H17L14 7Z" fill="#9ed8eb" stroke="#6baec6" strokeWidth=".8" /><path d="M14 7L17 2.500V13L14 17Z" fill="#61abc8" /><path d="M2 7H14V17H2Z" fill="#e8f7fc" stroke="#7fb9cd" strokeWidth=".8" />{corner}</>],
  ["Saved orientations", <><path d="M6 2H13L17 8L14 15H5L1 9Z" fill="#a9def0" stroke="#3b8aab" strokeWidth=".8" /><path d="M1 9H10L17 8M10 9L13 2" stroke="#3b8aab" strokeWidth=".8" /><path d="M11.500 9.500H16.500V17H11.500Z" fill="#fff" stroke="#7d8487" /><path d="M13 12H15.500M13 14.500H15.500" stroke="#6b7174" />{corner}</>],
  ["View manager", <><path d="M2.500 2.500H16.500V16.500H2.500Z" fill="#fff" stroke="#8b9093" /><path d="M2.500 5.500H16.500M2.500 8.500H16.500M2.500 11.500H12.500M5.500 3V16" stroke="#a9adaf" /><path d="M8 10.500H11L12 9H15L16 10.500H18V17H8Z" fill="#373d40" /><circle cx="13" cy="13.500" r="2" fill="#d8dcde" /></>],
  ["Perspective", <><path d="M2 5L7 2H18L16 12L11 17L3 14Z" fill="#b4dae8" stroke="#6a9fb4" strokeWidth=".8" /><path d="M2 5L12 7L18 2M12 7L11 17M7 2V11L3 14M7 11H16" stroke="#4b869f" strokeWidth=".8" /></>],
  ["Section display", <><path d="M2 6L6 2.500H16L2 16Z" fill="#c9ebf6" stroke="#70b2ca" strokeWidth=".8" /><path d="M2 17L17 2" stroke="#1a5270" strokeWidth="1.300" /><path d="M7 16.500H14M10 13.500H15M13 10.500H17M14 7.500H18" stroke="#858b8e" strokeDasharray="1 1" />{corner}</>],
  ["Datum display", <><path d="M1 1L5 5M5 1L1 5M10 1L4 16" stroke="#8b6b2b" strokeWidth="1.400" strokeDasharray="5 1.500" /><path d="M12 7V13H18M12 13L8 17M16 11L18 13L16 15" stroke="#8b6b2b" strokeWidth="1.200" />{corner}</>],
  ["Annotation display", <><path d="M1.500 2.500H10.500V8.500H1.500Z" fill="#fdf1cf" stroke="#a18a55" /><path d="M10.500 5.500H15.500V8M14 6.500L15.500 9L17 6.500" stroke="#44494c" /><path d="M8 14.500Q12.500 10.500 17 14.500Q12.500 18 8 14.500Z" stroke="#44494c" strokeWidth="1.200" fill="#fff" /><circle cx="12.500" cy="14.500" r="1.800" fill="#33383b" /></>],
  ["Spin center", <><path d="M5 4L10 9.500H16M10 9.500L5 15" stroke="#44494c" strokeWidth="1.300" /><circle cx="4.500" cy="4" r="2.500" fill="#5cae5a" /><circle cx="4.500" cy="15" r="2.500" fill="#3c86b0" /><circle cx="16" cy="9.500" r="2.500" fill="#df7168" /></>],
  ["Simulate", <><path d="M9 3L15.500 14.500H2.500Z" stroke="#b5b9bb" strokeWidth="2.200" /><path d="M11 11.500H17V17H11Z" fill="#a1a6a8" /><circle cx="14" cy="11" r="1.800" stroke="#a1a6a8" /></>],
  ["Pause", <path d="M4 4H8V15H4ZM10.500 4H14.500V15H10.500Z" fill="#989c9e" />],
  ["Results", <><path d="M1 4H17V15H8V12Q12 10 8 8H1Z" fill="#cfd2d4" /><path d="M11 4H17V15H11Q16 10 11 4Z" fill="#b5b9bb" /></>],
];

const openings = [
  "96,186 170,186 298,262 96,379",
  "295,186 431,186 362,227",
  "570,186 624,186 624,390 428,268",
  "360,293 624,449 624,491 553,491 360,386 167,497 96,497 96,456",
  "360,456 498,545 360,635 221,545",
  "96,594 167,594 360,705 553,594 624,594 624,636 360,789 96,635",
  "96,719 288,829 122,926 96,926",
  "360,870 457,926 262,926",
  "624,716 624,926 593,926 428,829",
];

const FrameModel = () => (
  <svg width="228" height="348" viewBox="18 24 684 1044" shapeRendering="crispEdges" role="img" aria-label="Frame assembly, top view" className="mt-[47px]">
    <path d="M39 186H681V927H39Z" fill="#a0adbc" />
    {openings.map((points) => (
      <polygon key={points} points={points} fill="#e8eaee" />
    ))}
    <path d="M18 24H39V1068H18ZM681 24H702V1068H681Z" fill="#0000ff" />
    <path d="M39 24H681V165H39ZM39 927H681V1068H39Z" fill="#ff0000" />
    <path d="M39 165H681V186H39Z" fill="#00ff00" />
    <g shapeRendering="geometricPrecision">
      <path d="M314 545H360" stroke="#e02a35" strokeWidth="4" />
      <path d="M359 545V592" stroke="#3ff4fa" strokeWidth="4" />
      <circle cx="314" cy="546" r="9" fill="#ff3338" />
      <circle cx="360" cy="592" r="9" fill="#35fbff" />
      <circle cx="361" cy="546" r="5" fill="#33e023" />
    </g>
  </svg>
);

const Viewport = () => (
  <main className="flex min-w-0 flex-1 flex-col items-center bg-[#e8eaee] pt-[7px]">
    <div role="toolbar" aria-label="Graphics" className="flex h-8 items-center border border-[#9da1a4] bg-[#f7f9fb] px-0.5">
      {viewTools.map(([name, art]) => (
        <button
          key={name}
          type="button"
          aria-label={name}
          className={`flex h-6 w-[26px] items-center justify-center ${name === "Spin center" ? "bg-[#dddfe1] outline -outline-offset-1 outline-[#b1b4b6]" : ""}`}
        >
          <Svg w={19}>{art}</Svg>
        </button>
      ))}
    </div>
    <FrameModel />
  </main>
);

const StatusBar = () => (
  <footer className="flex h-[38px] items-center border-t border-[#b4babd] bg-[#f7f9fb] pt-0.5">
    <div className="flex items-center gap-1 border-r border-[#a7abad] pr-[9px] pl-1.5">
      <button type="button" aria-label="Toggle navigator" className="flex h-6 w-[22px] items-center justify-center border border-[#adb0b2] bg-[#dddfdf]">
        <Svg w={18}>
          <path d="M1.500 1.500H16.500V16.500H1.500Z" fill="#fff" stroke="#8b9093" />
          <path d="M1.500 4.500H16.500" stroke="#8b9093" />
          <path d="M1.500 5.500H5.500V16.500H1.500Z" fill="#c4e9f6" stroke="#2b7294" />
          <path d="M8 13.500Q12.500 9.500 17 13.500Q12.500 17 8 13.500Z" fill="#fff" stroke="#44494c" />
          <circle cx="12.500" cy="13.500" r="1.500" fill="#33383b" />
        </Svg>
      </button>
      <button type="button" aria-label="Toggle browser" className="flex h-6 w-[22px] items-center justify-center">
        <Svg w={17}>
          <circle cx="8.500" cy="8.500" r="6.500" fill="#4ba3ce" />
          <path d="M5 5L8 3L10 6L7 9ZM10 9L14 7V11L11 13Z" fill="#b9e0f0" />
          <ellipse cx="8.500" cy="8.500" rx="9.500" ry="5" transform="rotate(-45 8.500 8.500)" stroke="#56707d" strokeWidth="1" />
        </Svg>
      </button>
      <button type="button" aria-label="Full screen" className="flex h-6 w-[22px] items-center justify-center">
        <Svg w={17}>
          <path d="M.5 .5H15.500V15.500H.5Z" fill="#dfecf2" stroke="#286b8b" />
        </Svg>
      </button>
    </div>
    <div className="mr-[90px] ml-auto flex items-center">
      <div className="mr-0.5 h-[30px] w-1.5 border-x border-[#b3b7b9]" />
      <div className="flex h-6 border border-[#c1c4c6]">
        <button type="button" aria-label="Find" className="flex w-[27px] items-center justify-center border-r border-[#c1c4c6]">
          <Svg w={17} h={16}>
            <path d="M4 1H7V4L8 5H9L10 4V1H13L16.500 11V15H10.500V10H6.500V15H.5V11Z" fill="#3b4144" />
            <path d="M4 3H7M10 3H13" stroke="#a0a5a7" />
            <path d="M3 8V14M13 8V14" stroke="#969b9d" strokeWidth="1.500" />
          </Svg>
        </button>
        <CaretDrop label="Find options" width="w-[14px]" />
      </div>
      <div className="mx-0.5 h-[30px] w-px bg-[#b3b7b9]" />
      <button type="button" aria-label="Geometry filter" className="flex h-7 w-10 items-center justify-center border border-[#a9adaf]">
        <Svg w={18}>
          <path d="M.5 5.500H12.500V17.500H.5ZM.5 5.500L5 .5H17.500V12.500L12.500 17.500M12.500 5.500L17.500 .5" stroke="#404649" fill="#fff" />
          <path d="M3 15V8H6V12H11V15Z" fill="#f5d79b" stroke="#cf9540" strokeWidth=".8" />
          <path d="M6 7H11V12H6Z" fill="#8fdcf7" stroke="#2b7fa3" strokeWidth=".8" />
        </Svg>
      </button>
    </div>
    <div className="relative mr-[18px] h-[23px] w-[165px]">
      <select aria-label="Selection filter" defaultValue="Geometry" className="block h-full w-full appearance-none border border-[#a9adaf] bg-[#fafbfb] pl-[7px] text-[11px] text-[#44494c]">
        <option>Geometry</option>
      </select>
      <span className="pointer-events-none absolute inset-y-0 right-0 flex w-4 items-center justify-center border border-[#a9adaf]">
        <Caret />
      </span>
    </div>
  </footer>
);

const taskApps: [string, ReactNode, string][] = [
  ["Start", <><path d="M1 .5H12.500V12H1ZM13.500 .5H25V12H13.500ZM1 13H12.500V24H1ZM13.500 13H25V24H13.500Z" fill="url(#win)" /><defs><linearGradient id="win" x1="0" y1="0" x2="1" y2="1"><stop stopColor="#74d5fb" /><stop offset="1" stopColor="#0f9af0" /></linearGradient></defs></>, ""],
  ["Search", <><circle cx="14" cy="10" r="8.500" fill="#4b4745" stroke="#e7e5e4" strokeWidth="2.200" /><path d="M8 16L2.500 21.500" stroke="#e7e5e4" strokeWidth="2.600" strokeLinecap="round" /></>, ""],
  ["Task view", <><path d="M7 0H25V16H7Z" fill="#e9e8e7" /><path d="M1 6.500H18.500V22H1Z" fill="#75726f" opacity=".9" /></>, ""],
  ["Chat", <><path d="M13 .5A11.500 11.500 0 1 1 7 22L1.500 23L3 18A11.500 11.500 0 0 1 13 .5Z" fill="#6460c4" /><path d="M6.500 7.500H15V16.500H6.500ZM16 10.500L20 8V16L16 13.500Z" fill="#fff" /></>, ""],
  ["File Explorer", <><path d="M1 1H9L11 4H25V9H1Z" fill="#db9d17" /><path d="M1 6H11L13 4H25V22H1Z" fill="#ffd04a" /><path d="M5 15H21V22H5Z" fill="#1c7fc9" /><path d="M8 18.500H18" stroke="#0b5b99" strokeWidth="2" /></>, "bg-[#a5a09d] w-1.5"],
  ["Edge", <><defs><linearGradient id="edge" x1="0" y1="0" x2="1" y2=".3"><stop stopColor="#1fa5e0" /><stop offset=".6" stopColor="#37c6c0" /><stop offset="1" stopColor="#6ae07a" /></linearGradient></defs><circle cx="13" cy="12" r="12" fill="#1570b8" /><path d="M1.300 10A12 12 0 0 1 24.800 10Q25.500 15 21 16.500Q15 17.500 16 14Q18 9 12 7.500Q6 6.500 1.300 10Z" fill="url(#edge)" /><path d="M1.300 10Q5 6.500 10 8.500Q6 13 8 18Q10 22.500 14 24A12 12 0 0 1 1.300 10Z" fill="#1b86d0" /><path d="M11 11Q7 18 13 21Q18 23 22.500 19.500Q17 25.500 11 23.500Q5 18 11 11Z" fill="#0e4a8c" /></>, ""],
  ["Store", <><path d="M7 6V1.500H19V6" stroke="#32a6dd" strokeWidth="2.500" /><path d="M1 5H25V20Q25 24 21 24H5Q1 24 1 20Z" fill="#f2f2f2" /><path d="M8 9H12.500V13.500H8Z" fill="#e5503d" /><path d="M13.500 9H18V13.500H13.500Z" fill="#7fba1c" /><path d="M8 14.500H12.500V19H8Z" fill="#23a0e8" /><path d="M13.500 14.500H18V19H13.500Z" fill="#fdb813" /></>, ""],
  ["Creo Parametric", <><path d="M1 0H25V24H1Z" fill="#fff" /><path d="M4.500 3.500H21.500V20.500H4.500Z" fill="#d7dadb" stroke="#4b5154" /><path d="M10.500 4H21V15H10.500Z" fill="#1899db" /><path d="M10 4V15H21M10 15L4.500 20.500" stroke="#38444a" /></>, "bg-[#f08768] w-4"],
  ["Clipchamp", <><path d="M5 1H22.500V19L19 22.500H1.500V4.500Z" fill="#1e6df0" /><path d="M16.500 7H13.500Q8.500 7 8.500 11.800Q8.500 16.500 13.500 16.500H16.500" stroke="#fff" strokeWidth="3" /></>, "bg-[#a5a09d] w-1.5"],
  ["Paint", <><path d="M13 .5C22 .5 26 8 23 13C20 17 15 15 15 19C15 24 9 25 5 20C-2 12 3 .5 13 .5Z" fill="#43b4e8" /><circle cx="7" cy="7" r="2" fill="#3ba542" /><circle cx="13" cy="4" r="2" fill="#ecd548" /><circle cx="5" cy="12.500" r="2" fill="#db4f37" /><circle cx="12" cy="12" r="1.500" fill="#1c3d52" /><path d="M17 7H21V12H17Z" fill="#e7e1d4" /><path d="M17.500 12H20.500V23Q19 25 17.500 23Z" fill="#a86a2c" /></>, "bg-[#a5a09d] w-1.5"],
];

const Taskbar = () => (
  <nav aria-label="Taskbar" className="grid h-12 grid-cols-[1fr_auto_1fr] items-center bg-linear-to-r from-[#1a2324] via-[#301d17] to-[#1c2527] text-white">
    <button type="button" className="flex items-center gap-2 pl-5 text-left leading-4">
      <Svg w={24} h={18}>
        <path d="M5.500 16.500A5 5 0 0 1 5 7A7 7 0 0 1 18.500 6A5.300 5.300 0 0 1 18.500 16.500Z" fill="#c5d4f1" />
        <path d="M5.500 16.500A5 5 0 0 1 6 7Q10 5 13 9Q17 6 21 8A5 5 0 0 1 18.500 16.500Z" fill="#e4ecfb" />
      </Svg>
      <span className="pt-0.5">
        <span className="block">83°F</span>
        <span className="block text-[#c5c9ca]">Cloudy</span>
      </span>
    </button>
    <div className="flex pl-0.5">
      {taskApps.map(([name, art, mark]) => (
        <button key={name} type="button" aria-label={name} className="flex h-12 w-11 items-center justify-center">
          <span className={`relative flex h-10 w-10 items-center justify-center rounded ${name === "Creo Parametric" ? "bg-[#453530]" : ""}`}>
            <Svg w={26} h={24}>{art}</Svg>
            {mark && <span className={`absolute bottom-0 h-[3px] rounded-full ${mark}`} />}
          </span>
        </button>
      ))}
    </div>
    <div className="flex items-center justify-end pr-5">
      <TitleButton label="Show hidden icons">
        <Svg w={12} h={8}>
          <path d="M.5 7L6 1.500L11.500 7" stroke="#fff" strokeWidth="1.200" />
        </Svg>
      </TitleButton>
      <TitleButton label="OneDrive">
        <Svg w={16} h={11}>
          <path d="M4 10.500A3.500 3.500 0 0 1 3.500 4A5 5 0 0 1 12.500 4.500A3.200 3.200 0 0 1 13 10.500Z" fill="#e9e9ea" />
          <path d="M3.500 4A5 5 0 0 1 12 4L6 7Z" fill="#aeb1b3" />
        </Svg>
      </TitleButton>
      <TitleButton label="Security">
        <Svg w={16}>
          <path d="M7.500 .5L14 3V8Q13 12.500 7.500 15Q1.500 12.500 1 8V3Z" fill="#2389dc" />
          <path d="M7.500 .5L14 3V8H7.500Z" fill="#52b8f3" />
          <circle cx="11" cy="11" r="4.700" fill="#14832e" />
          <path d="M8.800 11L10.500 12.700L13.300 9.500" stroke="#fff" strokeWidth="1.300" />
        </Svg>
      </TitleButton>
      <button type="button" aria-label="Network, sound and battery" className="flex items-center gap-[7px] pr-4 pl-2">
        <Svg w={17} h={13}>
          <path d="M1 5Q8.500-2.500 16 5M3.500 7.500Q8.500 2.500 13.500 7.500M6 10Q8.500 7.500 11 10" stroke="#fff" strokeWidth="1.400" />
          <circle cx="8.500" cy="11.500" r="1.300" fill="#fff" />
        </Svg>
        <Svg w={17} h={14}>
          <path d="M1 5H3.500L7.500 1.500V12.500L3.500 9H1Z" stroke="#fff" strokeWidth="1.200" />
          <path d="M9.500 4.500Q11.500 7 9.500 9.500" stroke="#fff" strokeWidth="1.200" />
          <path d="M11.500 2.500Q14.500 7 11.500 11.500M13.500 1Q17.500 7 13.500 13" stroke="#787675" />
        </Svg>
        <Svg w={17} h={14}>
          <path d="M4.500 3.500H14.500V11.500H4.500V8" stroke="#fff" strokeWidth="1.300" />
          <path d="M6.500 5.500H12.500V9.500H6.500ZM15.500 6H17V9H15.500ZM0 3H5V6Q5 8 2.500 8Q0 8 0 6ZM1 1H2V3H1ZM3.500 1H4.500V3H3.500Z" fill="#fff" />
        </Svg>
      </button>
      <div className="text-right leading-4">
        <time className="block">1:46 PM</time>
        <time className="block">7/7/2022</time>
      </div>
      <span className="ml-[7px] flex h-4 w-4 items-center justify-center rounded-full bg-[#f0826a] text-[11px] leading-4 text-[#33201b]">1</span>
    </div>
  </nav>
);

export default function App() {
  return (
    <div className="flex min-h-screen flex-col overflow-x-hidden bg-[#e8eaee] font-['Open_Sans',sans-serif] text-xs">
      <TitleBar />
      <TabBar />
      <Ribbon />
      <div className="flex flex-1">
        <SidePanel />
        <Viewport />
      </div>
      <StatusBar />
      <Taskbar />
    </div>
  );
}
